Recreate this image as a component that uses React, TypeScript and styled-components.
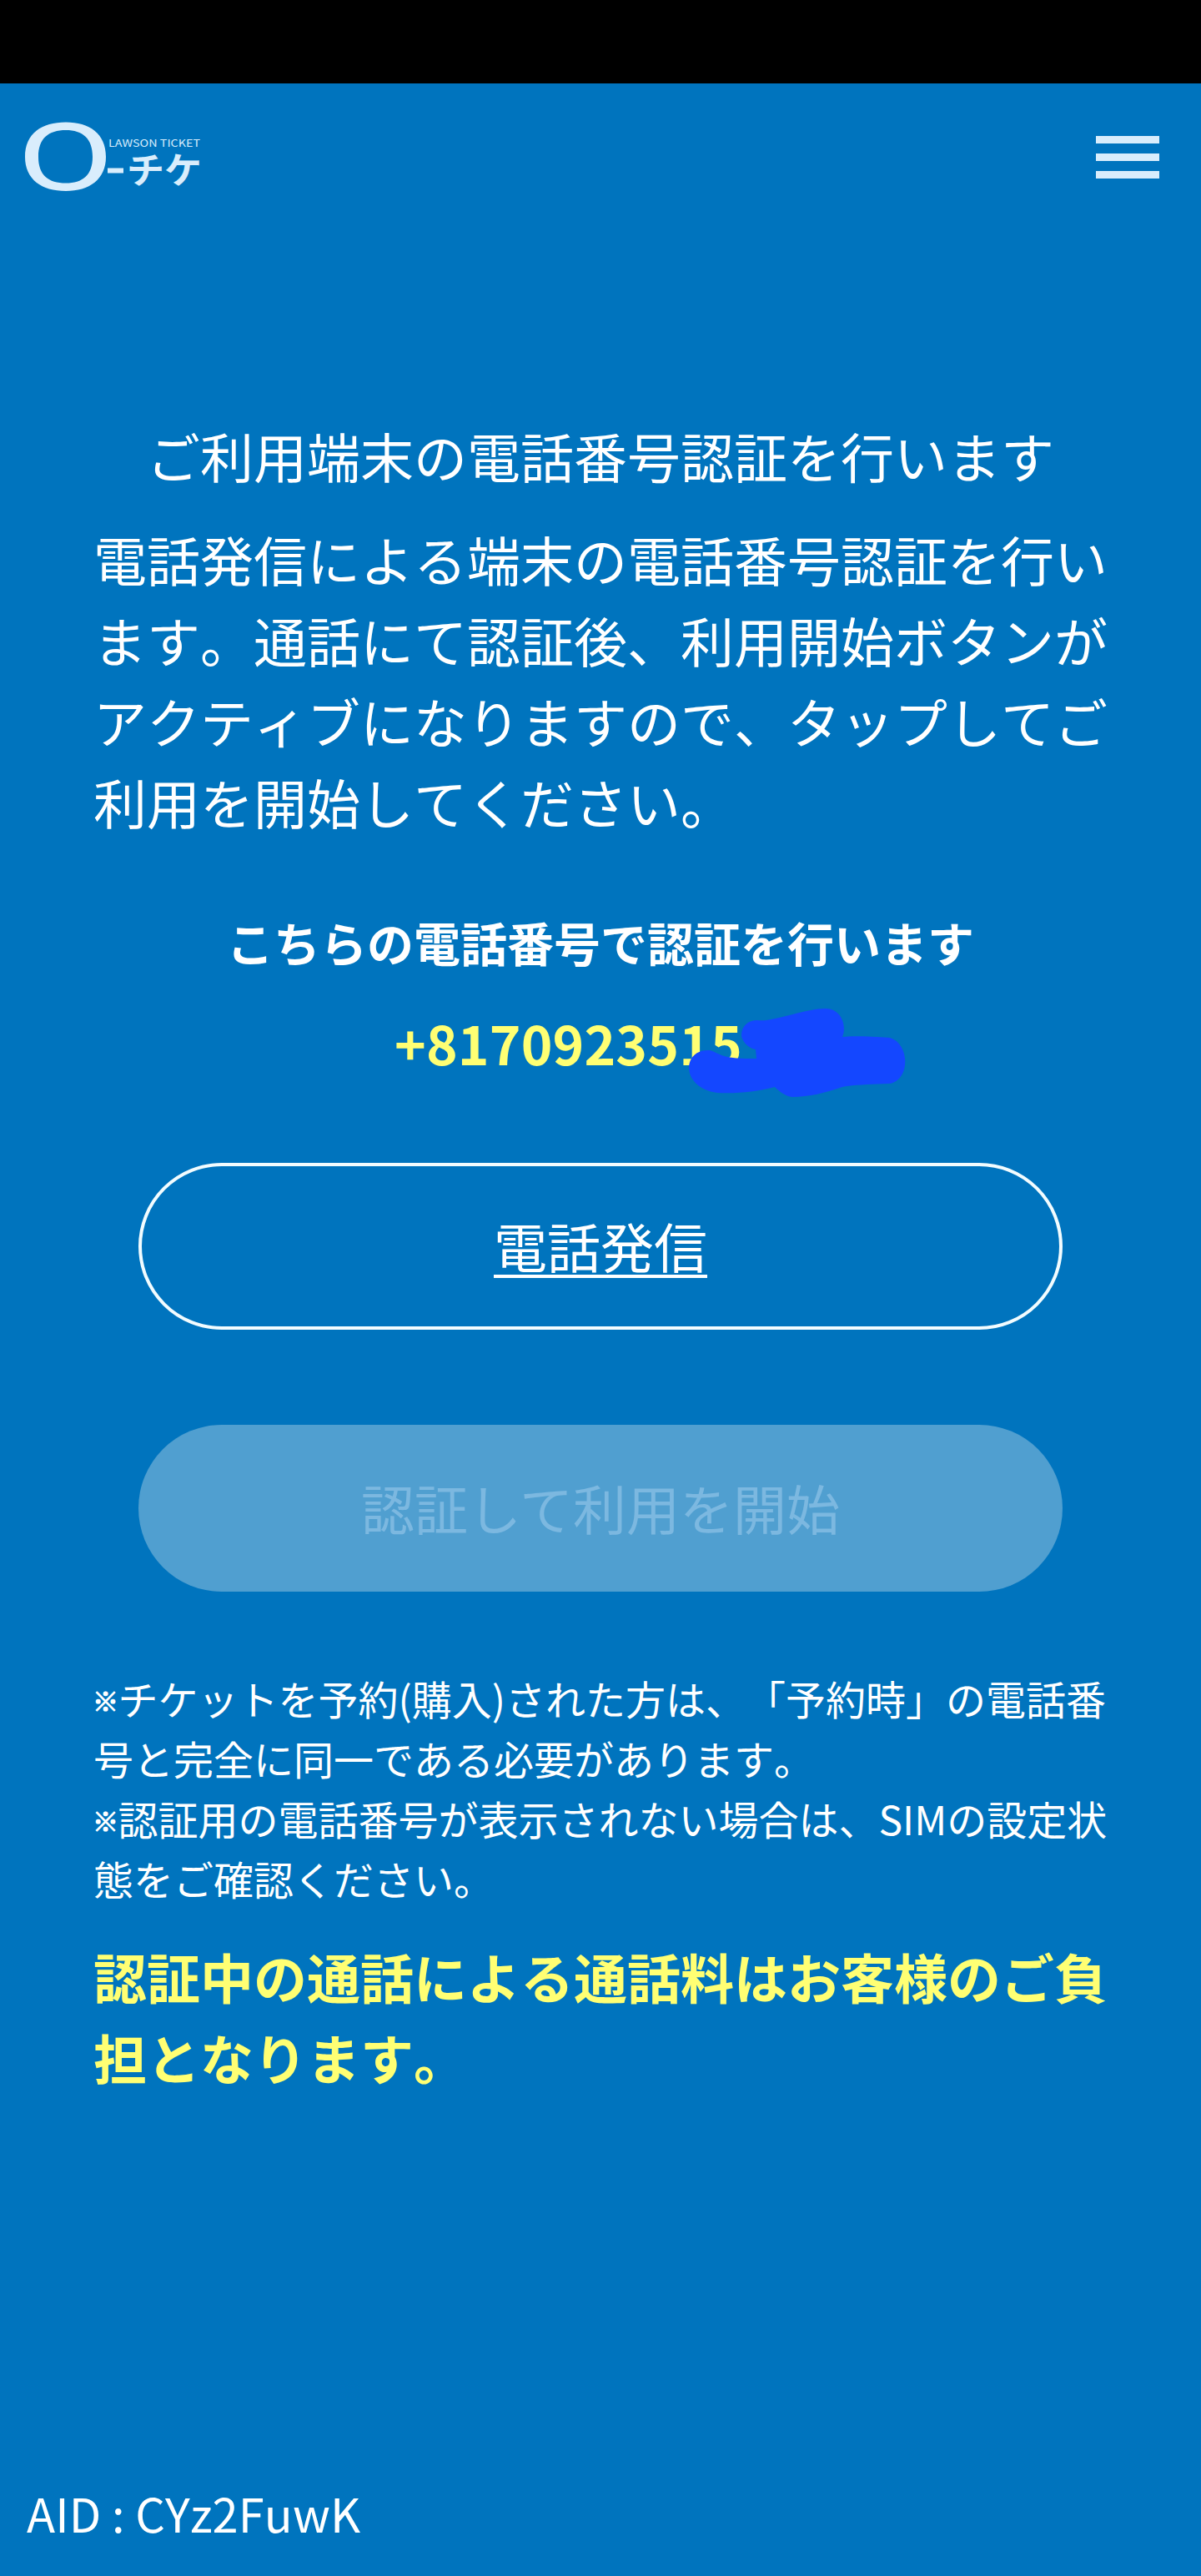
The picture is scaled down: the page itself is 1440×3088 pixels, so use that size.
import React from "react";
import styled, { createGlobalStyle } from "styled-components";

const GlobalStyle = createGlobalStyle`
  * { box-sizing: border-box; }
  body {
    margin: 0;
    background: #0074be;
    font-family: "Noto Sans CJK JP", sans-serif;
    font-kerning: none;
    text-spacing-trim: space-all;
    color: #fff;
  }
`;

const Screen = styled.div`
  display: flex;
  flex-direction: column;
  width: 1440px;
  height: 3088px;
  background: #0074be;
`;

const StatusBar = styled.div`
  flex: none;
  height: 100px;
  background: #000;
`;

const Header = styled.header`
  display: flex;
  flex: none;
  align-items: center;
  justify-content: space-between;
  height: 176px;
  padding: 0 50px 0 28px;
`;

const Logo = styled.svg`
  display: block;
  width: 216px;
  height: 88px;
`;

const MenuButton = styled.button`
  display: flex;
  flex-direction: column;
  gap: 12px;
  padding: 0;
  border: 0;
  background: none;
`;

const MenuBar = styled.span`
  width: 76px;
  height: 9px;
  background: #d9edfc;
`;

const Main = styled.main`
  display: flex;
  flex: 1;
  flex-direction: column;
  padding: 221px 112px 0;
`;

const Title = styled.h1`
  margin: 0;
  font-size: 64px;
  font-weight: 400;
  line-height: 97px;
  text-align: center;
`;

const Lead = styled.p`
  margin: 27px 0 0;
  font-size: 64px;
  line-height: 97px;
`;

const Subheading = styled.h2`
  margin: 78px 0 0;
  font-size: 56px;
  font-weight: 700;
  line-height: 84px;
  text-align: center;
`;

const PhoneRow = styled.div`
  position: relative;
  margin-top: 30px;
  padding-left: 361px;
  color: #ffff73;
  font-size: 64px;
  font-weight: 700;
  letter-spacing: 0.15px;
  line-height: 96px;
`;

const Scribble = styled.svg`
  position: absolute;
  top: 0;
  left: 708px;
  width: 280px;
  height: 120px;
`;

const Actions = styled.div`
  display: flex;
  flex-direction: column;
  gap: 114px;
  margin: 97px 54px 0;
`;

const PillButton = styled.button<{ $muted?: boolean }>`
  height: 200px;
  padding: 0 0 4px;
  border: ${(p) => (p.$muted ? "0" : "4px solid #f2fcff")};
  border-radius: 100px;
  background: ${(p) => (p.$muted ? "#509fd0" : "transparent")};
  color: ${(p) => (p.$muted ? "#7cb8e0" : "#fff")};
  font-family: inherit;
  font-size: 64px;
  line-height: 96px;
  text-decoration: ${(p) => (p.$muted ? "none" : "underline")};
  text-decoration-thickness: 4px;
  text-underline-offset: 8px;
`;

const Notes = styled.div`
  margin-top: 91px;
  font-size: 48px;
  line-height: 72px;
`;

const Note = styled.p`
  margin: 0;
`;

const NoteMark = styled.span`
  display: inline-block;
  width: 30.5px;
  margin-left: -1px;
  font-size: 31px;
  font-weight: 700;
  line-height: 0;
  vertical-align: 5px;
  -webkit-text-stroke: 1.2px currentColor;
`;

const Warning = styled.p`
  margin: 33px 0 0;
  color: #ffff73;
  font-size: 64px;
  font-weight: 700;
  line-height: 97px;
`;

const Footer = styled.footer`
  flex: none;
  padding: 0 32px 34px;
  font-size: 56px;
  letter-spacing: 0.1px;
  line-height: 84px;
`;

const LogoText = styled.text<{ $size: number; $bold?: boolean }>`
  font-size: ${(p) => p.$size}px;
  font-weight: ${(p) => (p.$bold ? 700 : 400)};
`;

const LawsonTicketLogo = () => (
  <Logo viewBox="28 144 216 88" fill="#d9edfc" aria-label="ローチケ">
    <path
      fillRule="evenodd"
      d="M79 146.500C107 146.500 127 160 127 188C127 215 107 229 79 229C50 229 30 215 30 188C30 160 50 146.500 79 146.500ZM79 156C58 156 46 166 46 188C46 210 58 219.500 79 219.500C99 219.500 111 210 111 188C111 166 99 156 79 156Z"
    />
    <rect x="129" y="201.500" width="19" height="6" />
    <LogoText $size={12} x="130" y="176" textLength="110" lengthAdjust="spacingAndGlyphs">
      LAWSON TICKET
    </LogoText>
    <LogoText $size={43} $bold x="152" y="219.500" textLength="90" lengthAdjust="spacingAndGlyphs">
      チケ
    </LogoText>
  </Logo>
);

export default function App() {
  return (
    <Screen lang="ja">
      <GlobalStyle />
      <StatusBar />
      <Header>
        <LawsonTicketLogo />
        <MenuButton aria-label="メニュー">
          <MenuBar />
          <MenuBar />
          <MenuBar />
        </MenuButton>
      </Header>
      <Main>
        <Title>ご利用端末の電話番号認証を行います</Title>
        <Lead>
          電話発信による端末の電話番号認証を行います。通話にて認証後、利用開始ボタンがアクティブになりますので、タップしてご利用を開始してください。
        </Lead>
        <Subheading>こちらの電話番号で認証を行います</Subheading>
        <PhoneRow>
          +8170923515
          <Scribble viewBox="820 1200 280 120" fill="#1447ff">
            <path d="M908 1222C925 1225 965 1208 990 1208C1008 1208 1016 1228 1010 1242C1030 1240 1055 1242 1067 1243C1091 1250 1092 1294 1066 1298C1045 1299 1025 1299 1010 1302C990 1309 970 1314 950 1314C941 1313 934 1307 929 1302C906 1308 885 1310 860 1309C838 1306 826 1293 826 1278C827 1264 838 1257 851 1258C864 1262 865 1269 907 1268L906 1257C897 1256 889 1246 889 1240C889 1229 897 1222 908 1222Z" />
          </Scribble>
        </PhoneRow>
        <Actions>
          <PillButton>電話発信</PillButton>
          <PillButton $muted disabled>
            認証して利用を開始
          </PillButton>
        </Actions>
        <Notes>
          <Note>
            <NoteMark>※</NoteMark>
            チケットを予約(購入)された方は、「予約時」の電話番号と完全に同一である必要があります。
          </Note>
          <Note>
            <NoteMark>※</NoteMark>
            認証用の電話番号が表示されない場合は、SIMの設定状態をご確認ください。
          </Note>
        </Notes>
        <Warning>認証中の通話による通話料はお客様のご負担となります。</Warning>
      </Main>
      <Footer>AID : CYz2FuwK</Footer>
    </Screen>
  );
}
